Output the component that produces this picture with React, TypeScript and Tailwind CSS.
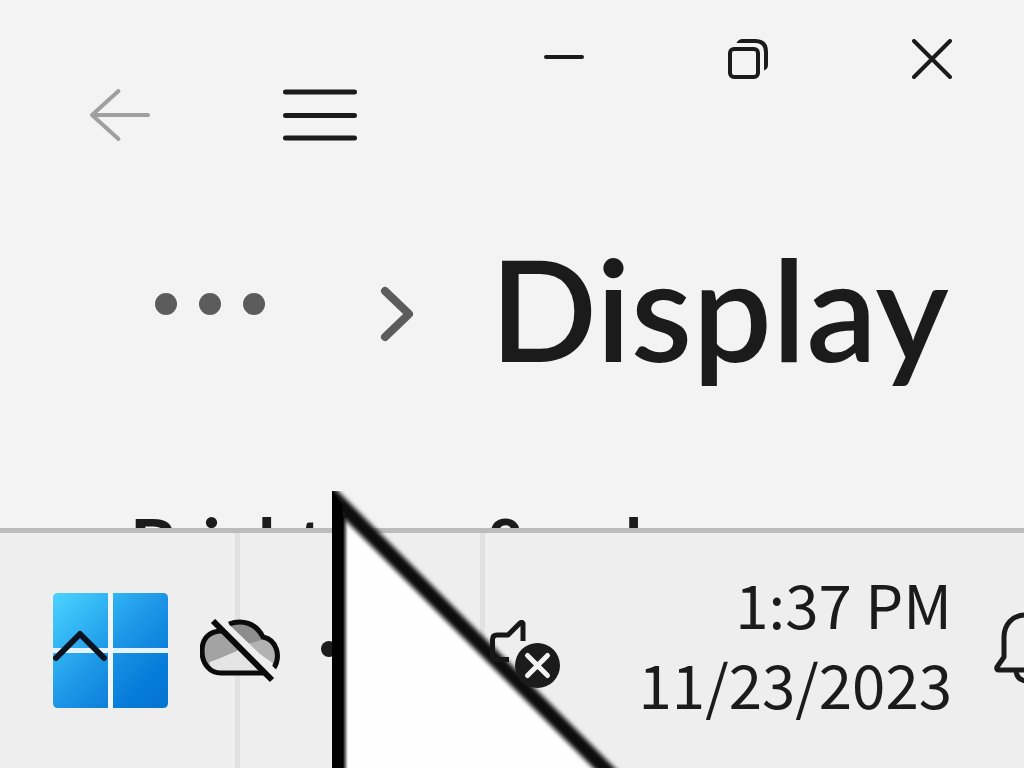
import React from "react";

const BackIcon = () => (
  <svg className="h-[56px] w-[64px]" viewBox="0 0 64 56" fill="none" stroke="#9f9f9f" strokeWidth="4" strokeLinecap="round" strokeLinejoin="round">
    <path d="M60 28H4M30.500 4L4 28L30.500 52" />
  </svg>
);

const MenuIcon = () => (
  <svg className="h-[56px] w-[76px]" viewBox="0 0 76 56" stroke="#1b1b1b" strokeWidth="5" strokeLinecap="round">
    <path d="M3.500 5H72.500M3.500 28.500H72.500M3.500 51H72.500" />
  </svg>
);

const MinimizeIcon = () => (
  <svg className="h-[40px] w-[40px]" viewBox="0 0 40 40" stroke="#1b1b1b" strokeWidth="4" strokeLinecap="round">
    <path d="M2 18H38" />
  </svg>
);

const RestoreIcon = () => (
  <svg className="h-[40px] w-[40px]" viewBox="0 0 40 40" fill="none" stroke="#1b1b1b" strokeWidth="4">
    <rect x="2" y="10" width="28" height="28" rx="4" />
    <path d="M8.500 4Q10.500 0 14.500 0H27Q40 0 40 13V26Q40 30 36 31.500V13Q36 4 27 4Z" fill="#1b1b1b" stroke="none" />
  </svg>
);

const CloseIcon = () => (
  <svg className="h-[40px] w-[40px]" viewBox="0 0 40 40" stroke="#1b1b1b" strokeWidth="4" strokeLinecap="round">
    <path d="M2 2L38 38M38 2L2 38" />
  </svg>
);

const WindowsLogo = () => (
  <svg className="h-[115px] w-[115px]" viewBox="0 0 115 115">
    <defs>
      <linearGradient id="logo" x1="0" y1="0" x2="115" y2="115" gradientUnits="userSpaceOnUse">
        <stop offset="0" stopColor="#4cd4ff" />
        <stop offset="0.25" stopColor="#32b6f4" />
        <stop offset="0.5" stopColor="#1c95e6" />
        <stop offset="0.8" stopColor="#077bd8" />
        <stop offset="1" stopColor="#0673d0" />
      </linearGradient>
    </defs>
    <path
      fill="url(#logo)"
      d="M5 0H55V55H0V5Q0 0 5 0ZM60 0H110Q115 0 115 5V55H60ZM0 60H55V115H5Q0 115 0 110ZM60 60H115V110Q115 115 110 115H60Z"
    />
    <path d="M0 57.500H115" stroke="#e4f3fc" strokeWidth="5" />
    <path d="M57.500 0V115" stroke="#f0f6fa" strokeWidth="5" />
  </svg>
);

const CloudOffIcon = () => (
  <svg className="h-[64px] w-[80px]" viewBox="0 0 80 64">
    <path d="M20 55C-1 55 -3 24 15 14L27 12L44 31L10 43Z" fill="#a3a3a3" />
    <path d="M28 5C42 -1 57 4 64 18L68 22L48 25Z" fill="#8d8d8d" />
    <path d="M48 25L64 20C78 24 80 38 74 45L57 33Z" fill="#b2b2b2" />
    <path d="M9 44L39 31L62 54H20C15 53 11 49 9 44Z" fill="#e4e4e4" />
    <path
      d="M29 5C42 0 56 4 63 18C77 21 81 37 74 49M24 12C8 11 2 21 2 32C2 45 10 54 21 54H66"
      fill="none"
      stroke="#0b0b0b"
      strokeWidth="5"
    />
    <path d="M25 5L73 51" stroke="#eeeeee" strokeWidth="5" />
    <path d="M13 2L72 61" stroke="#0b0b0b" strokeWidth="6" />
  </svg>
);

const MutedIcon = () => (
  <svg className="h-[70px] w-[72px]" viewBox="0 0 72 70" fill="none" stroke="#171717" strokeLinecap="butt" strokeLinejoin="round">
    <path d="M33 21V3.500Q32 1 29 4L18 15H7Q2.500 15 2.500 19.500V39.500H19" strokeWidth="5" />
    <circle cx="47.500" cy="45.500" r="22.500" fill="#1b1b1b" stroke="none" />
    <path d="M37.500 35.500L57.500 55.500M57.500 35.500L37.500 55.500" stroke="#f3f3f3" strokeWidth="5" strokeLinecap="round" />
  </svg>
);

const BellIcon = () => (
  <svg className="h-[72px] w-[64px]" viewBox="0 0 64 72" fill="none" stroke="#1b1b1b" strokeWidth="5" strokeLinejoin="round">
    <path d="M32 4C18 4 10 14 10 26V46L3 56Q2 59 5 59H59Q62 59 61 56L54 46V26C54 14 46 4 32 4Z" />
    <path d="M22 60Q23 69 32 70Q41 69 42 60" />
  </svg>
);

const Cursor = () => (
  <svg className="pointer-events-none absolute bottom-0 left-[332px] z-10 h-[277px] w-[320px]" viewBox="0 0 320 277">
    <defs>
      <filter id="soft" x="-10%" y="-10%" width="120%" height="120%">
        <feGaussianBlur stdDeviation="2" />
      </filter>
      <linearGradient id="edge">
        <stop offset="0" stopColor="#000" />
        <stop offset="1" stopColor="#000" stopOpacity="0" />
      </linearGradient>
    </defs>
    <path d="M8 18L280 290H8Z" fill="#fefefe" />
    <path d="M-10 -5L300 305" stroke="#080808" strokeWidth="15" filter="url(#soft)" />
    <path d="M0 0L11 16V277H0Z" fill="#000" />
    <rect x="11" y="24" width="5" height="253" fill="url(#edge)" />
  </svg>
);

const windowControls = [
  { label: "Minimize", icon: <MinimizeIcon /> },
  { label: "Restore", icon: <RestoreIcon /> },
  { label: "Close", icon: <CloseIcon /> },
];

const SettingsWindow: React.FC = () => (
  <main className="min-h-0 flex-1 overflow-hidden font-['Lato','Noto_Sans',sans-serif]">
    {/* Title bar */}
    <header className="flex items-start justify-between pl-5">
      <nav className="flex pt-14">
        <button aria-label="Back" className="flex h-[118px] w-[200px] items-center justify-center">
          <BackIcon />
        </button>
        <button aria-label="Open navigation" className="flex h-[118px] w-[200px] items-center justify-center">
          <MenuIcon />
        </button>
      </nav>
      <div className="flex">
        {windowControls.map((control) => (
          <button key={control.label} aria-label={control.label} className="flex h-[118px] w-[184px] items-center justify-center">
            {control.icon}
          </button>
        ))}
      </div>
    </header>

    {/* Breadcrumb */}
    <div className="flex h-[280px] items-center pl-[155px]">
      <button aria-label="More" className="mb-5">
        <svg className="h-[22px] w-[110px]" viewBox="0 0 110 22" fill="#5c5c5c">
          <circle cx="11" cy="11" r="11" />
          <circle cx="55" cy="11" r="11" />
          <circle cx="99" cy="11" r="11" />
        </svg>
      </button>
      <svg className="ml-[115px] h-[56px] w-[34px]" viewBox="0 0 34 56" fill="none" stroke="#5c5c5c" strokeWidth="8" strokeLinecap="round" strokeLinejoin="round">
        <path d="M5 5L29 28L5 51" />
      </svg>
      <h1 className="mb-3 ml-[76px] text-[141px] leading-[160px] font-semibold">Display</h1>
    </div>

    <h2 className="pt-[49px] pl-[130px] text-[71px] leading-[80px] font-bold whitespace-nowrap">Brightness &amp; color</h2>
  </main>
);

const Taskbar: React.FC = () => (
  <footer className="relative flex h-[240px] shrink-0 items-center overflow-hidden border-t-[5px] border-[#bcbcbc] bg-[#eeeeee] pl-[53px]">
    {/* Pane separators */}
    <div className="absolute inset-y-0 left-[235px] w-[5px] bg-[#e1e1e1]" />
    <div className="absolute inset-y-0 left-[480px] w-[5px] bg-[#e1e1e1]" />

    <button aria-label="Start" className="relative">
      <WindowsLogo />
      <svg className="absolute top-[37px] left-0 h-[34px] w-[54px]" viewBox="0 0 54 34" fill="none" stroke="#0b1220" strokeWidth="6" strokeLinecap="round" strokeLinejoin="round">
        <path d="M3 28L27 4L51 28" />
      </svg>
    </button>
    <button aria-label="OneDrive" className="relative ml-8">
      <CloudOffIcon />
    </button>
    <span className="mb-1 ml-[41px] h-4 w-4 rounded-full bg-[#1b1b1b]" />
    {/* The volume badge stays above the pointer */}
    <button aria-label="Volume muted" className="relative z-20 mt-2 ml-[153px]">
      <MutedIcon />
    </button>
    <button className="mb-4 ml-auto text-right text-[60px] leading-[80px] whitespace-nowrap">
      <time className="block">1:37 PM</time>
      <time className="block">11/23/2023</time>
    </button>
    <button aria-label="Notifications" className="mb-2 -mr-[34px] ml-[42px] shrink-0">
      <BellIcon />
    </button>
  </footer>
);

export default function App() {
  return (
    <div className="relative flex h-screen flex-col overflow-hidden bg-[#f3f3f3] font-['Noto_Sans_CJK_SC','Noto_Sans',sans-serif] text-[#1b1b1b]">
      <SettingsWindow />
      <Taskbar />
      <Cursor />
    </div>
  );
}
